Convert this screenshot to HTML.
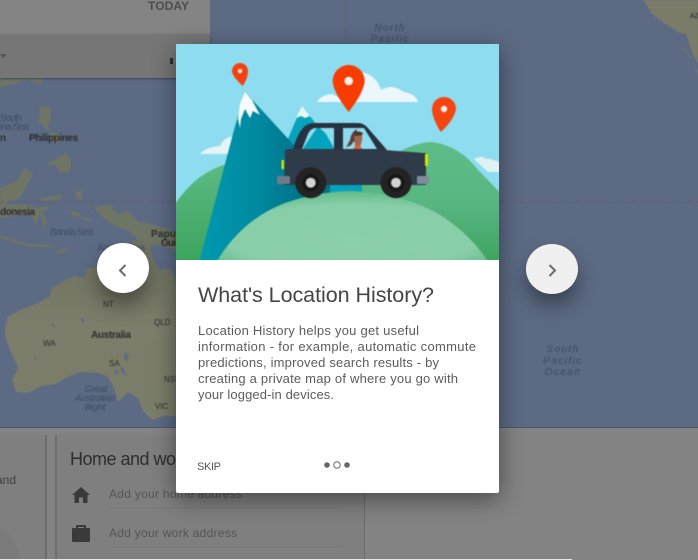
<!DOCTYPE html>
<html lang="en"><head><meta charset="utf-8"><title>Location History</title>
<style>
html,body{margin:0;padding:0;background:#5c6a84}
#p{position:relative;width:698px;height:560px;overflow:hidden;background:#5c6a84;font-family:"Liberation Sans",sans-serif}
svg{position:absolute;left:0;top:0}
.box{position:absolute}
.card{position:absolute;left:176px;top:44px;width:323px;height:449px;background:#fff;border-radius:2px;box-shadow:0 6px 24px rgba(0,0,0,.45)}
.btn{position:absolute;width:52px;height:50px;border-radius:50%;box-shadow:0 12px 20px rgba(0,0,0,.38)}
</style></head><body><div id="p">
<svg width="698" height="560" viewBox="0 0 698 560" style="filter:blur(.45px)">
<defs>
<linearGradient id="ld" x1="0" y1="0" x2="0" y2="1"><stop offset="0" stop-color="#6f7260"/><stop offset=".5" stop-color="#7c7d6b"/><stop offset="1" stop-color="#7a7e68"/></linearGradient>
</defs>
<g fill="#6f7565">
<path d="M0 78H44L41 84L36 83L28 79L14 84L0 87Z"/>
<path d="M40 107L50 106L51 120L47 125L52 131L46 129L39 122Z"/>
<path d="M50 131L62 136L58 143L52 142Z"/>
<path d="M48 163L66 153L71 160L70 172L60 173L56 165L48 165Z"/>
<path d="M0 188L18 180L24 168L33 174L28 184L20 198L0 206Z"/>
<path d="M0 205L22 204L38 208L52 206L42 212L48 222L44 227L40 214L36 225L30 214L0 218Z"/>
<path d="M93 207L110 205L118 214L126 210L140 222L165 228L176 233V250L160 245L146 247L130 232L108 222L100 214Z"/>
<path d="M40 198L62 195L60 200L40 201Z"/>
<path d="M76 192L82 190L82 200L76 199Z"/>
<path d="M0 238L20 244L30 247H50L53 245L30 244L0 236Z"/>
<path d="M55 252L72 246L62 254Z"/>
<path d="M70 210L82 214L74 218Z"/>
<path d="M80 217L94 219L86 221Z"/>
</g>
<path d="M5 327L8 316L20 310L38 303L50 296L52 288L62 282L74 276L84 278L88 268L100 266L118 262L126 246L136 240L148 240L154 262L160 270L170 268L176 282V416L165 416L152 420L143 411L138 398L128 392L118 402L114 388L108 377L98 373L80 372L66 378L56 384L42 386L28 393L16 392L12 380L18 368L10 350L5 336Z" fill="url(#ld)"/>
<g fill="#5c6a84">
<path d="M125 352L129 355L126 362L124 358Z"/><path d="M120 366L123 368L127 376L122 373Z"/><path d="M114 368L119 373L116 375Z"/>
<path d="M81 318L85 320L82 323Z"/><path d="M52 323L55 325L52 327Z"/><path d="M35 356L37 358L34 360Z"/>
</g>
<path d="M643 0L652 14L664 23L678 32L684 50L692 60L698 75V0Z" fill="#7a7b69"/>
<path d="M678 32L686 34L692 52L698 64V72L690 56L682 46Z" fill="#5c6a84"/>
<path d="M345 0V44" stroke="#6b5a6c" stroke-width="1" stroke-dasharray="4 3"/>
<path d="M0 202H176M499 202H698" stroke="#6b5a6c" stroke-width="1" stroke-dasharray="4 3"/>
<g font-family="Liberation Sans" font-size="10" fill="#2d2d2b">
<text x="29" y="141" font-weight="bold" fill="#2b2b2b" textLength="49">Philippines</text>
<text x="0" y="215" font-weight="bold" textLength="35">donesia</text>
<text x="151" y="237" font-weight="bold" textLength="25">Papu</text>
<text x="161" y="246" font-weight="bold" textLength="15">Gui</text>
<text x="0" y="141" font-weight="bold">n</text>
<text x="103" y="307" font-size="8">NT</text>
<text x="154" y="325" font-size="8">QLD</text>
<text x="91" y="338" font-weight="bold" textLength="40">Australia</text>
<text x="43" y="346" font-size="8">WA</text>
<text x="109" y="366" font-size="8">SA</text>
<text x="164" y="382" font-size="8">NSW</text>
<text x="155" y="409" font-size="8">VIC</text>
</g>
<g font-family="Liberation Sans" font-size="9.500" font-style="italic" fill="#3f4b60" text-anchor="middle">
<text x="96" y="392" textLength="23">Great</text>
<text x="95" y="401" textLength="40">Australian</text>
<text x="95" y="410" textLength="21">Bight</text>
</g>
<g font-family="Liberation Sans" font-size="10" fill="#414e65">
<text x="0" y="121" textLength="22">South</text>
<text x="0" y="130" textLength="29">ina Sea</text>
<text x="50" y="235" textLength="43">Banda Sea</text>
<text x="97" y="251" textLength="48">Arafura Sea</text>
</g>
<g font-family="Liberation Sans" font-size="10" font-style="italic" fill="#3d4a5f" text-anchor="middle">
<text x="390" y="31" letter-spacing="1.4">North</text>
<text x="390" y="42" letter-spacing="1.4">Pacific</text>
<text x="563" y="352" letter-spacing="1.4">South</text>
<text x="563" y="364" letter-spacing="1.4">Pacific</text>
<text x="563" y="375" letter-spacing="1.4">Ocean</text>
</g>
<text x="690" y="18" font-family="Liberation Sans" font-size="7" fill="#222">AZ</text>
</svg>

<div class="box" style="left:0;top:0;width:210px;height:34px;background:#848484"></div>
<div class="box" style="left:0;top:34px;width:210px;height:44px;background:#767676;box-shadow:0 1px 2px rgba(40,45,60,.6)"></div>
<div class="box" style="left:0;top:427px;width:698px;height:133px;background:#838383;border-top:1px solid #4e5869;box-sizing:border-box"></div>
<div class="box" style="left:0;top:435px;width:45px;height:125px;background:#7f7f7f;border-right:2px solid #6d6d6d"></div>
<div class="box" style="left:55px;top:435px;width:310px;height:125px;background:#7f7f7f;border-left:2px solid #6d6d6d;border-right:1px solid #6a6a6a;box-sizing:border-box"></div>
<div class="box" style="left:0;top:559px;width:572px;height:1px;background:#e8e8e8"></div>

<svg width="698" height="560" viewBox="0 0 698 560">
<path d="M0 54H7L3 58Z" fill="#555"/>
<rect x="170" y="58" width="3" height="6" fill="#2f2f2f"/>
<text x="148" y="10" font-family="Liberation Sans" font-size="12" font-weight="bold" fill="#4d4d4d" textLength="41">TODAY</text>
<path d="M0 525Q15 535 20 559H0Z" fill="#7b7b7b"/>
<text x="-4" y="484" font-family="Liberation Sans" font-size="12" fill="#3e3e3e">and</text>
<text x="70" y="465" font-family="Liberation Sans" font-size="18" fill="#2e2e2e" textLength="106">Home and wo</text>
<path d="M81 487L90 495H87.500V503H83V497.500H79V503H74.500V495H72Z" fill="#3a3a3a"/>
<path d="M76 528V526Q76 525 77 525H85Q86 525 86 526V528H89Q90 528 90 529V541Q90 542 89 542H73Q72 542 72 541V529Q72 528 73 528ZM78 528H84V527H78Z" fill="#3a3a3a" fill-rule="evenodd"/>
<g font-family="Liberation Sans" font-size="12" fill="#555">
<text x="109" y="498" textLength="133">Add your home address</text>
<text x="109" y="537" textLength="128">Add your work address</text>
</g>
<path d="M109 508H342M109 547H342" stroke="#777" stroke-width="1"/>
</svg>

<div class="btn" style="left:97px;top:243px;background:#fff"></div>
<div class="btn" style="left:526px;top:244px;background:#f0f0f0"></div>
<div class="card"></div>

<svg width="698" height="560" viewBox="0 0 698 560">
<defs>
<linearGradient id="mt" x1="0" y1="0" x2="1" y2="0"><stop offset="0" stop-color="#009ab0"/><stop offset=".45" stop-color="#00889f"/><stop offset=".8" stop-color="#006f85"/></linearGradient>
<linearGradient id="hr" x1="0" y1="0" x2="0" y2="1"><stop offset="0" stop-color="#5ebc88"/><stop offset=".5" stop-color="#58b681"/><stop offset="1" stop-color="#3ca35e"/></linearGradient>
<linearGradient id="hl" x1="0" y1="0" x2="0" y2="1"><stop offset="0" stop-color="#5cba84"/><stop offset="1" stop-color="#3ba35c"/></linearGradient>
<radialGradient id="hf" cx=".5" cy=".62" r=".62"><stop offset="0" stop-color="#8bd0ab"/><stop offset=".72" stop-color="#88cea9"/><stop offset="1" stop-color="#60bb88"/></radialGradient>
<filter id="s" x="-5%" y="-5%" width="110%" height="110%" color-interpolation-filters="sRGB"><feGaussianBlur stdDeviation="0.5"/></filter>
<clipPath id="im"><rect x="176" y="44" width="323" height="216"/></clipPath>
<clipPath id="w1"><path d="M302 149L308 134Q310 129 315 128H334V149Z"/></clipPath>
</defs>
<g clip-path="url(#im)"><g filter="url(#s)">
<rect x="170" y="38" width="335" height="228" fill="#8edcf0"/>
<g fill="#ecf7fb">
<path d="M317 102Q321 95 332 94L340 98L360 72Q376 74 381 90Q392 83 404 92Q416 94 418 102Z"/>
<path d="M200 154Q206 147 220 146Q226 134 238 137Q249 141 248 154Z" fill="#e4f4f7"/>
<path d="M474 159Q482 155 486 159Q492 158 505 165V172H488Z" fill="#dff2f3"/>
</g>
<path d="M170 212Q195 170 232 163L240 266H170Z" fill="url(#hl)"/>
<path d="M402 150Q420 142 432 142Q460 146 478 170Q490 182 505 198V266H360V185Z" fill="url(#hr)"/>
<path d="M330 190L302 106L285 146L340 196Z" fill="#0aa0ba"/>
<path d="M285 146L302 106L335 148L362 190V200H300Z" fill="#07a3bd"/>
<path d="M245 92L258 106L335 190L320 205L270 230L218 266H198L234 130Z" fill="url(#mt)"/>
<path d="M330 185H362V193H330Z" fill="#02a2bd"/>
<path d="M245 92L252 100L260 115L253 111L250 118L245 109L241 119L240 128L238 119L240 104Z" fill="#f6fbfc"/>
<path d="M302 106L310 116L305 118L301 116L296 118Z" fill="#e8f6f6"/>
<path d="M214 266Q240 220 285 203Q320 191 352 191Q400 193 435 212Q470 232 491 266Z" fill="url(#hf)"/>
<path d="M232 71a8 8 0 1 1 16 0Q248 78 242.700 86Q232 76 232 71Z" fill="#f4400f"/>
<circle cx="240" cy="71" r="2.300" fill="#e9e0d5"/>
<path d="M332.700 81a16 16 0 1 1 32 0Q364 92 348.700 112Q333 92 332.700 81Z" fill="#f73c00"/>
<circle cx="348.700" cy="81" r="4.300" fill="#f6f3ee"/>
<path d="M432 109a12 12 0 1 1 24 0Q454 120 440.700 132Q432 118 432 109Z" fill="#f44510"/>
<circle cx="444" cy="109" r="3.200" fill="#f4efe9"/>
<path d="M293 149Q297 135 303 128Q307 123 315 123H358Q363 123 367 127L387 150L372 152H293Z" fill="#273240"/>
<g clip-path="url(#w1)">
<rect x="300" y="125" width="36" height="26" fill="#8edcf0"/>
<path d="M302 150L318 126L326 134L334 148V150Z" fill="#05a2bc"/>
</g>
<path d="M343 128H364L377 149H343Z" fill="#8edcf0"/>
<path d="M357 129Q351 132 350 140Q347 146 346 147Q352 146 353 142L356 141Z" fill="#5d4138"/>
<path d="M354 134Q356 131 361 132Q363 135 362 140Q361 145 360 146H355Z" fill="#9d6650"/>
<path d="M354 133Q358 130 363 133L362 135L355 136Z" fill="#453632"/>
<path d="M353 149L356 145L360 145L362 149Z" fill="#df5b3e"/>
<path d="M285 150L290 149L384 150L424 153L426 153V185L284 185L285 160Z" fill="#2f3b48"/>
<rect x="277" y="176" width="13" height="8" rx="1" fill="#6c7c8a"/>
<rect x="417" y="176" width="12" height="8" rx="1" fill="#7d8d99"/>
<rect x="281.500" y="160" width="2.500" height="9" fill="#d5e004"/>
<rect x="425" y="154" width="3" height="12" fill="#d7e304"/>
<circle cx="310.700" cy="182.700" r="15.500" fill="#232323"/>
<circle cx="396" cy="182.700" r="15.500" fill="#232323"/>
<circle cx="310.700" cy="182.700" r="8.500" fill="#171717"/>
<circle cx="396" cy="182.700" r="8.500" fill="#171717"/>
<circle cx="310.700" cy="182.700" r="5" fill="#d2d2d2"/>
<circle cx="396" cy="182.700" r="5" fill="#d2d2d2"/>
</g></g>
<path d="M125.500 265L120 270.500L125.500 276" fill="none" stroke="#6d6d6d" stroke-width="2"/>
<path d="M549.500 265L555 270.500L549.500 276" fill="none" stroke="#6d6d6d" stroke-width="2"/>
<g font-family="Liberation Sans" style="filter:blur(.25px)">
<text x="198" y="302" font-size="21.500" fill="#454545" textLength="236">What's Location History?</text>
<g font-size="13" fill="#5c5c5c">
<text x="198" y="335" textLength="221">Location History helps you get useful</text>
<text x="198" y="351" textLength="278">information - for example, automatic commute</text>
<text x="198" y="367" textLength="241">predictions, improved search results - by</text>
<text x="198" y="383" textLength="260">creating a private map of where you go with</text>
<text x="198" y="399" textLength="136">your logged-in devices.</text>
</g>
<text x="197" y="470" font-size="11" fill="#555" textLength="24">SKIP</text>
</g>
<circle cx="327" cy="465" r="2.800" fill="#666"/>
<circle cx="337" cy="465" r="3.200" fill="#fff" stroke="#6a6a6a" stroke-width="1"/>
<circle cx="347" cy="465" r="2.800" fill="#666"/>
</svg>
</div></body></html>
